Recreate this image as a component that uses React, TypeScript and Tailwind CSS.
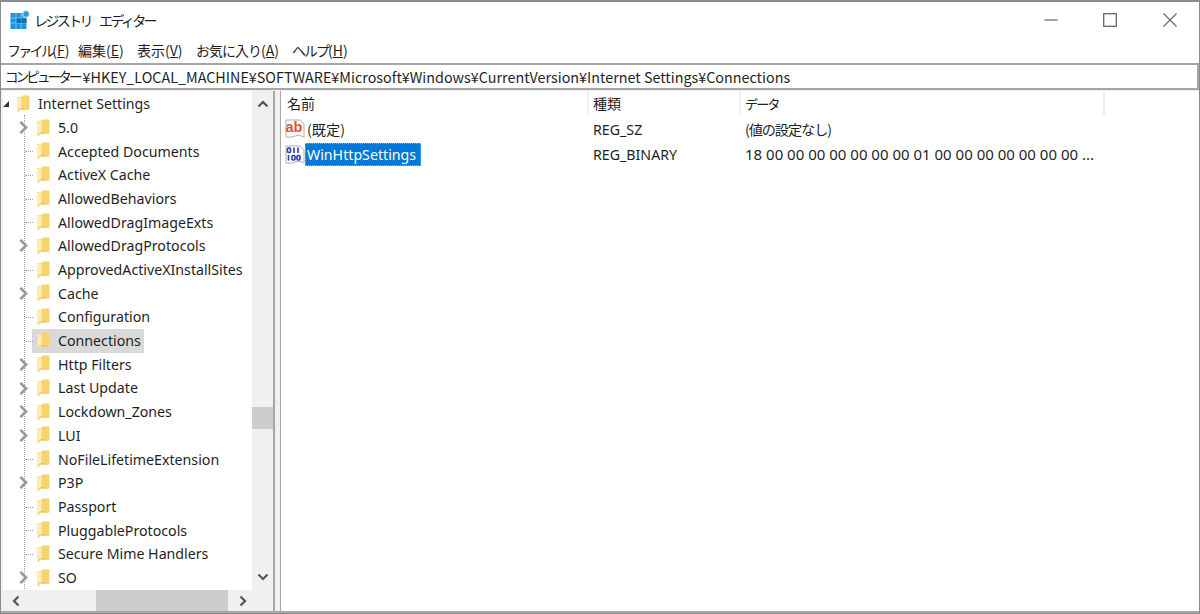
import React from "react";

const jp = { fontFamily: '"Noto Sans CJK JP", "Noto Sans", sans-serif' };

function Folder() {
  return (
    <svg width="13" height="18" viewBox="0 0 13 18" className="mr-[1px] shrink-0">
      <path d="M0.5 2 H4 L5.5 0.5 H12.5 V14.5 H3 L0.5 17.5 Z" fill="#f7d46c" />
      <path d="M0.5 2.5 H4.5 V15 L0.5 17.5 Z" fill="#fdeeb5" />
      <path d="M5 13 L12.5 14.5 H3 L0.5 17.5 L2 14 Z" fill="#ecc055" />
    </svg>
  );
}

function Chevron({ dir, color = "#555", size = 12 }: { dir: "up" | "down" | "left" | "right"; color?: string; size?: number }) {
  const d = {
    up: "M1.5 8.5 L6 4 L10.5 8.5",
    down: "M1.5 3.5 L6 8 L10.5 3.5",
    left: "M8.5 1.5 L4 6 L8.5 10.5",
    right: "M3.5 1.5 L8 6 L3.5 10.5",
  }[dir];
  return (
    <svg width={size} height={size} viewBox="0 0 12 12" className="shrink-0">
      <path d={d} fill="none" stroke={color} strokeWidth="2.2" />
    </svg>
  );
}

const rows: [string, boolean, boolean?][] = [
  ["5.0", true],
  ["Accepted Documents", false],
  ["ActiveX Cache", false],
  ["AllowedBehaviors", false],
  ["AllowedDragImageExts", false],
  ["AllowedDragProtocols", true],
  ["ApprovedActiveXInstallSites", false],
  ["Cache", true],
  ["Configuration", false],
  ["Connections", false, true],
  ["Http Filters", true],
  ["Last Update", true],
  ["Lockdown_Zones", true],
  ["LUI", true],
  ["NoFileLifetimeExtension", false],
  ["P3P", true],
  ["Passport", false],
  ["PluggableProtocols", false],
  ["Secure Mime Handlers", false],
  ["SO", true],
];

function TreeRow({ name, exp, sel }: { name: string; exp: boolean; sel?: boolean }) {
  return (
    <div className="relative flex h-[23.7px] shrink-0 items-center pl-[12px]">
      <div className="flex w-[17px] shrink-0 justify-center">
        {exp ? <Chevron dir="right" color="#9a9a9a" size={15} /> : null}
      </div>
      {exp ? null : (
        <div className="absolute left-[22px] top-[12px] w-[8px] border-t border-dotted border-[#a0a0a0]" />
      )}
      <div className={`flex h-[24px] items-center pl-[5px] ${sel ? "bg-[#d9d9d9] pr-[3px]" : ""}`}>
        <Folder />
        <span className="ml-[7px] whitespace-nowrap">{name}</span>
      </div>
    </div>
  );
}

export default function App() {
  return (
    <div
      className="flex h-[614px] w-[1200px] flex-col overflow-hidden border-x border-b border-t-2 border-[#8c8c8c] bg-white text-[14.2px] text-[#1f1f1f]"
      style={{ fontFamily: '"Noto Sans", "Noto Sans CJK JP", sans-serif' }}
    >
      <div className="flex h-[36px] shrink-0 items-center pl-[9px]">
        <svg width="20" height="20" viewBox="0 0 20 20" className="shrink-0">
          <rect x="0.5" y="3" width="16" height="16" fill="#1d95dd" />
          <path d="M1 8 H16 M1 13 H16 M6 3 V19 M11 3 V19" stroke="#6cc6f2" strokeWidth="1" />
          <rect x="6.5" y="8.5" width="4.5" height="4.5" fill="#0f6fb5" />
          <rect x="11.5" y="8.5" width="5" height="4.5" fill="#0f6fb5" />
          <circle cx="16" cy="4" r="3.4" fill="#2e9ad6" stroke="#fff" strokeWidth="0.8" />
        </svg>
        <span className="ml-[4px] flex gap-[8px] text-[14px] tracking-[-2.6px] whitespace-nowrap" style={jp}>
          <span>レジストリ</span>
          <span>エディター</span>
        </span>
        <div className="ml-auto flex items-center">
          <svg width="14" height="14" viewBox="0 0 14 14" className="mr-[45px]"><path d="M0.5 7 H13.5" stroke="#777" strokeWidth="1.4" /></svg>
          <svg width="14" height="14" viewBox="0 0 14 14" className="mr-[46px]"><rect x="0.7" y="0.7" width="12.6" height="12.6" fill="none" stroke="#666" strokeWidth="1.3" /></svg>
          <svg width="14" height="14" viewBox="0 0 14 14" className="mr-[22px]"><path d="M0.5 0.5 L13.5 13.5 M13.5 0.5 L0.5 13.5" stroke="#666" strokeWidth="1.1" /></svg>
        </div>
      </div>

      <div className="flex h-[25px] shrink-0 items-center pl-[6px] text-[14px]" style={jp}>
        <span className="w-[71px] whitespace-nowrap"><span className="tracking-[-2.7px]">ファイル</span>(<u>F</u>)</span>
        <span className="w-[59px] whitespace-nowrap">編集(<u>E</u>)</span>
        <span className="w-[59px] whitespace-nowrap">表示(<u>V</u>)</span>
        <span className="w-[96px] whitespace-nowrap"><span className="tracking-[-1px]">お気に入り</span>(<u>A</u>)</span>
        <span className="whitespace-nowrap"><span className="tracking-[-2px]">ヘルプ</span>(<u>H</u>)</span>
      </div>

      <div
        className="flex h-[27px] shrink-0 items-center border-y-2 border-r-2 border-[#a6a6a6] pl-[4px] text-[14.35px] whitespace-nowrap"
        style={jp}
      >
        <span className="text-[13.5px] tracking-[-2.85px]">コンピューター</span>
        <span className="ml-[3px]">¥HKEY_LOCAL_MACHINE¥SOFTWARE¥Microsoft¥Windows¥CurrentVersion¥Internet Settings¥Connections</span>
      </div>

      <div className="flex min-h-0 flex-1 border-b-2 border-[#a6a6a6] bg-[#f0f0f0]">
        <div className="ml-[2px] mt-[1px] flex w-[272px] shrink-0 flex-col border-r-2 border-[#a6a6a6] bg-white">
          <div className="flex min-h-0 flex-1">
            <div className="relative flex w-[249px] flex-col overflow-hidden pt-[1px]">
              <div className="absolute left-[21px] top-[24px] h-[490px] border-l border-dotted border-[#a0a0a0]" />
              <div className="flex h-[23.7px] shrink-0 items-center">
                <svg width="8" height="8" viewBox="0 0 8 8" className="mr-[6px] shrink-0"><path d="M0 7 L6 7 L6 1 Z" fill="#333" /></svg>
                <Folder />
                <span className="ml-[7px] whitespace-nowrap">Internet Settings</span>
              </div>
              {rows.map(([n, e, s]) => (
                <TreeRow key={n} name={n} exp={e} sel={s} />
              ))}
            </div>
            <div className="flex w-[21px] shrink-0 flex-col items-center bg-[#f0f0f0] py-[7px]">
              <Chevron dir="up" />
              <div className="mt-[297px] h-[22px] w-full shrink-0 bg-[#cdcdcd]" />
              <div className="flex-1" />
              <Chevron dir="down" />
            </div>
          </div>
          <div className="flex h-[21px] shrink-0 items-center bg-[#f0f0f0]">
            <div className="flex w-[93px] justify-start pl-[7px]"><Chevron dir="left" /></div>
            <div className="h-full w-[132px] bg-[#cdcdcd]" />
            <div className="pl-[9px]"><Chevron dir="right" /></div>
          </div>
        </div>

        <div className="ml-[5px] mt-[1px] flex-1 border-l border-[#a6a6a6] bg-white">
          <div className="flex h-[24px] items-center text-[14px]" style={jp}>
            <span className="h-full w-[308px] border-r-2 border-[#f0f0f0] pl-[6px] leading-[24px]">名前</span>
            <span className="h-full w-[152px] border-r-2 border-[#f0f0f0] pl-[4px] leading-[24px]">種類</span>
            <span className="h-full w-[364px] border-r-2 border-[#f0f0f0] pl-[4px] leading-[24px]"><span className="text-[13px] tracking-[-1.7px]">データ</span></span>
          </div>
          <div className="mt-[2px] flex h-[25px] items-center">
            <div className="flex w-[308px] items-center pl-[4px]">
              <svg width="20" height="20" viewBox="0 0 20 20" className="shrink-0">
                <path d="M1 1 H15 L19 5 V18 Q14 15 10 17 T1 18 Z" fill="#fff" stroke="#b0b0b0" />
                <text x="0.5" y="13" fontSize="14.5" fontWeight="700" fill="#e0532a" fontFamily="Liberation Sans">ab</text>
              </svg>
              <span className="ml-[2px]" style={jp}>(既定)</span>
            </div>
            <span className="w-[152px] pl-[4px]">REG_SZ</span>
            <span className="pl-[4px] tracking-[-1.1px]" style={jp}>(値の設定なし)</span>
          </div>
          <div className="flex h-[25px] items-center">
            <div className="flex w-[308px] items-center pl-[4px]">
              <svg width="20" height="20" viewBox="0 0 20 20" className="shrink-0">
                <path d="M1 1 H15 L19 5 V18 Q14 15 10 17 T1 18 Z" fill="#fff" stroke="#b0b0b0" />
                <g fill="none" stroke="#2a3fa8" strokeWidth="1.6">
                  <rect x="2.5" y="3" width="3" height="4.5" rx="1" />
                  <path d="M9 2.5 V8 M13 2.5 V8" />
                  <path d="M3.5 10 V15.5" />
                  <rect x="7" y="10.5" width="3" height="4.5" rx="1" />
                  <rect x="12" y="10.5" width="3" height="4.5" rx="1" />
                </g>
              </svg>
              <span className="flex h-[23px] items-center border border-dotted border-[#cfa46a] bg-[#0078d7] pl-[1px] pr-[4px] text-white">WinHttpSettings</span>
            </div>
            <span className="w-[152px] pl-[4px]">REG_BINARY</span>
            <span className="pl-[4px] text-[15px] whitespace-nowrap">18 00 00 00 00 00 00 00 01 00 00 00 00 00 00 00 ...</span>
          </div>
        </div>
      </div>
    </div>
  );
}
